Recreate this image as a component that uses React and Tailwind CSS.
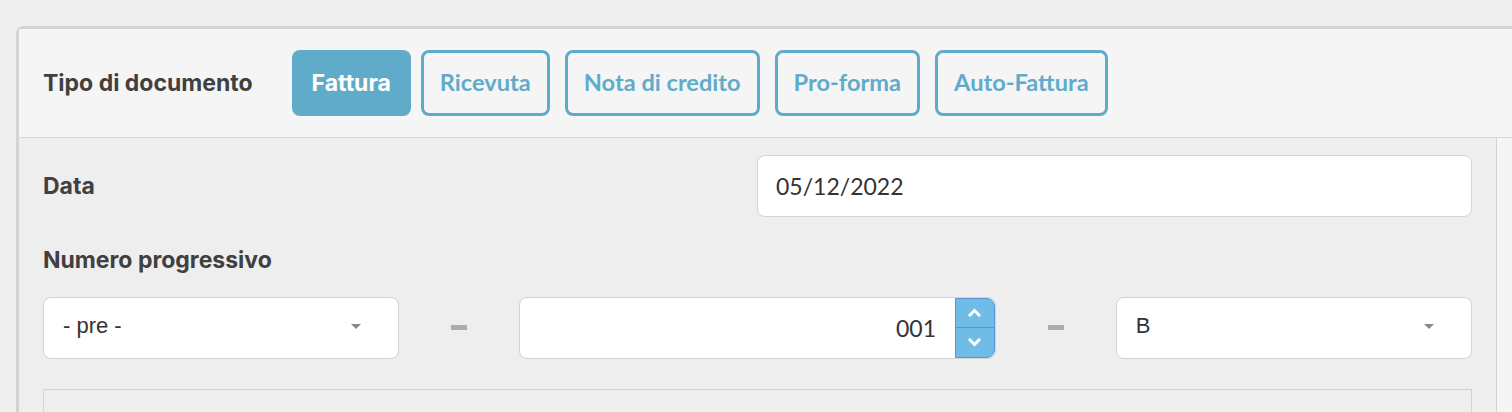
const tabs = ['Ricevuta', 'Nota di credito', 'Pro-forma', 'Auto-Fattura']

function Caret() {
  return <span className="ml-auto mr-[37px] mt-[2px] h-0 w-0 border-x-[5px] border-t-[5px] border-x-transparent border-t-[#8a8a8a]" />
}

function Dash() {
  return (
    <div className="flex w-[120px] items-center justify-center">
      <span className="h-[5px] w-4 bg-[#acacac]" />
    </div>
  )
}

function Chevron({ up }) {
  return (
    <svg width="13" height="9" viewBox="0 0 13 9">
      <polyline
        points={up ? '2,7 6.5,2.5 11,7' : '2,2 6.5,6.5 11,2'}
        fill="none"
        stroke="white"
        strokeWidth="3"
        strokeLinecap="square"
      />
    </svg>
  )
}

export default function App() {
  const label = 'text-[23px] font-bold text-[#404040] font-["Inter","Liberation_Sans",sans-serif]'
  const field = 'h-[62px] rounded-lg border border-[#d4d4d4] bg-white'

  return (
    <div className="h-[412px] overflow-hidden bg-[#efefef] pl-4 pt-[26px]">
      <div className="w-[1520px] rounded-tl-lg border-l-[3px] border-t-[3px] border-[#d3d3d3]">
        <div className="flex h-[109px] items-center border-b border-[#d6d6d6] bg-[#f5f5f5] pl-6">
          <span className={label + ' mr-[39px]'}>Tipo di documento</span>
          <button className='mr-[10px] h-[66px] rounded-lg bg-[#60abca] px-[20px] text-[23px] font-bold text-white font-["Inter",sans-serif]'>Fattura</button>
          <div className="flex gap-[15px]">
            {tabs.map(t => (
              <button key={t} className='h-[66px] rounded-lg border-[3px] border-[#60abca] px-[16px] text-[23.6px] font-bold text-[#60abca] font-["Lato",sans-serif]'>{t}</button>
            ))}
          </div>
        </div>
        <div className="flex">
          <div className="h-[300px] w-[1478px] shrink-0 border-r border-[#d4d4d4] bg-[#eeeeee] px-6 pt-[17px]">
            <div className="flex items-center">
              <span className={label + ' flex-1'}>Data</span>
              <div className={field + ' flex w-[715px] items-center px-[18px] text-[23px] text-[#333] font-["Lato",sans-serif]'}>05/12/2022</div>
            </div>
            <div className={label + ' mt-[26px]'}>Numero progressivo</div>
            <div className="mt-[19px] flex">
              <div className={field + ' flex w-[357px] items-center pb-[4px] pl-[19px] text-[22px] text-[#333] font-["Liberation_Sans",sans-serif]'}>
                <span>- pre -</span>
                <Caret />
              </div>
              <Dash />
              <div className={field + ' flex w-[478px] overflow-hidden'}>
                <div className='flex flex-1 items-center justify-end pr-[19px] pt-[2px] text-[23px] text-[#333] font-["Lato",sans-serif]'>001</div>
                <div className="flex w-[40px] flex-col rounded-r-lg border border-[#5b93d6] bg-[#6fbde6]">
                  <div className="flex flex-1 items-center justify-center border-b border-[#5b93d6]">
                    <Chevron up />
                  </div>
                  <div className="flex flex-1 items-center justify-center">
                    <Chevron />
                  </div>
                </div>
              </div>
              <Dash />
              <div className={field + ' flex w-[357px] items-center pb-[4px] pl-[19px] text-[22px] text-[#333] font-["Liberation_Sans",sans-serif]'}>
                <span>B</span>
                <Caret />
              </div>
            </div>
            <div className="mt-[30px] h-[60px] border border-[#d4d4d4] bg-[#eeeeee]" />
          </div>
          <div className="h-[300px] flex-1 bg-[#f5f5f5]" />
        </div>
      </div>
    </div>
  )
}
